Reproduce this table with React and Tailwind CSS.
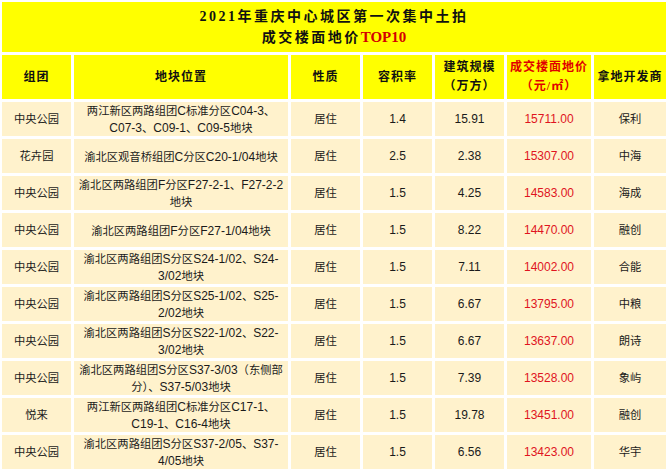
import React from "react";

const rows = [
  ["中央公园", ["两江新区两路组团C标准分区C04-3、", "C07-3、C09-1、C09-5地块"], "居住", "1.4", "15.91", "15711.00", "保利"],
  ["花卉园", ["渝北区观音桥组团C分区C20-1/04地块"], "居住", "2.5", "2.38", "15307.00", "中海"],
  ["中央公园", ["渝北区两路组团F分区F27-2-1、F27-2-2", "地块"], "居住", "1.5", "4.25", "14583.00", "海成"],
  ["中央公园", ["渝北区两路组团F分区F27-1/04地块"], "居住", "1.5", "8.22", "14470.00", "融创"],
  ["中央公园", ["渝北区两路组团S分区S24-1/02、S24-", "3/02地块"], "居住", "1.5", "7.11", "14002.00", "合能"],
  ["中央公园", ["渝北区两路组团S分区S25-1/02、S25-", "2/02地块"], "居住", "1.5", "6.67", "13795.00", "中粮"],
  ["中央公园", ["渝北区两路组团S分区S22-1/02、S22-", "3/02地块"], "居住", "1.5", "6.67", "13637.00", "朗诗"],
  ["中央公园", ["渝北区两路组团S分区S37-3/03（东侧部", "分）、S37-5/03地块"], "居住", "1.5", "7.39", "13528.00", "象屿"],
  ["悦来", ["两江新区两路组团C标准分区C17-1、", "C19-1、C16-4地块"], "居住", "1.5", "19.78", "13451.00", "融创"],
  ["中央公园", ["渝北区两路组团S分区S37-2/05、S37-", "4/05地块"], "居住", "1.5", "6.56", "13423.00", "华宇"],
];

const isCJK = (ch) => /[\u3000-\u9fff\uff00-\uffef]/.test(ch);

function Mixed({ text }) {
  const parts = [];
  let cur = "";
  let curCJK = null;
  for (const ch of text) {
    const c = isCJK(ch);
    if (curCJK === null || c === curCJK) {
      cur += ch;
      curCJK = c;
    } else {
      parts.push([cur, curCJK]);
      cur = ch;
      curCJK = c;
    }
  }
  if (cur) parts.push([cur, curCJK]);
  return (
    <>
      {parts.map(([t, c], i) =>
        c ? (
          <span key={i} className="text-[11.3px]">{t}</span>
        ) : (
          <span key={i} className="text-[12px]">{t}</span>
        )
      )}
    </>
  );
}

const serif = "font-['Liberation_Serif','Noto_Sans_CJK_SC',serif]";
const sans = "font-['Liberation_Sans','Noto_Sans_CJK_SC',sans-serif]";

export default function App() {
  return (
    <div className="w-[669px] h-[473px] bg-white pl-[2px] pt-[2px] overflow-hidden">
      <div className="grid grid-cols-[69px_214px_69px_69px_69px_84px_72px] grid-rows-[50px_44px_repeat(10,34px)] gap-[3px]">
        <div className={`col-span-7 bg-[#ffff00] flex flex-col items-center justify-center ${serif} font-bold text-[14px] leading-[20px] text-[#111] tracking-[2.5px] pt-[1px]`}>
          <div>2021年重庆中心城区第一次集中土拍</div>
          <div>
            成交楼面地价<span className="text-[#d40000] tracking-normal text-[15px]">TOP10</span>
          </div>
        </div>
        {[
          ["组团"],
          ["地块位置"],
          ["性质"],
          ["容积率"],
          ["建筑规模", "（万方）"],
          ["成交楼面地价", "（元/㎡）"],
          ["拿地开发商"],
        ].map((h, i) => (
          <div
            key={i}
            className={`bg-[#ffff00] flex flex-col items-center justify-center ${serif} font-bold text-[12px] leading-[19px] tracking-[1px] ${i === 5 ? "text-[#e00000]" : "text-[#111]"}`}
          >
            {h.map((l, j) => (
              <div key={j}>{l}</div>
            ))}
          </div>
        ))}
        {rows.map((r, ri) => (
          <React.Fragment key={ri}>
            <div className={`bg-[#fff2cc] flex items-center justify-center ${sans} text-[11.3px] text-[#1a1a1a]`}>{r[0]}</div>
            <div className={`bg-[#fff2cc] flex flex-col items-center justify-center ${sans} leading-[15px] text-[#1a1a1a] whitespace-nowrap`}>
              {r[1].map((l, j) => (
                <div key={j}>
                  <Mixed text={l} />
                </div>
              ))}
            </div>
            <div className={`bg-[#fff2cc] flex items-center justify-center ${sans} text-[11.3px] text-[#1a1a1a]`}>{r[2]}</div>
            <div className={`bg-[#fff2cc] flex items-center justify-center ${sans} text-[12px] text-[#1a1a1a]`}>{r[3]}</div>
            <div className={`bg-[#fff2cc] flex items-center justify-center ${sans} text-[12px] text-[#1a1a1a]`}>{r[4]}</div>
            <div className={`bg-[#fff2cc] flex items-center justify-center ${sans} text-[12px] text-[#e0141e]`}>{r[5]}</div>
            <div className={`bg-[#fff2cc] flex items-center justify-center ${sans} text-[11.3px] text-[#1a1a1a]`}>{r[6]}</div>
          </React.Fragment>
        ))}
      </div>
    </div>
  );
}
